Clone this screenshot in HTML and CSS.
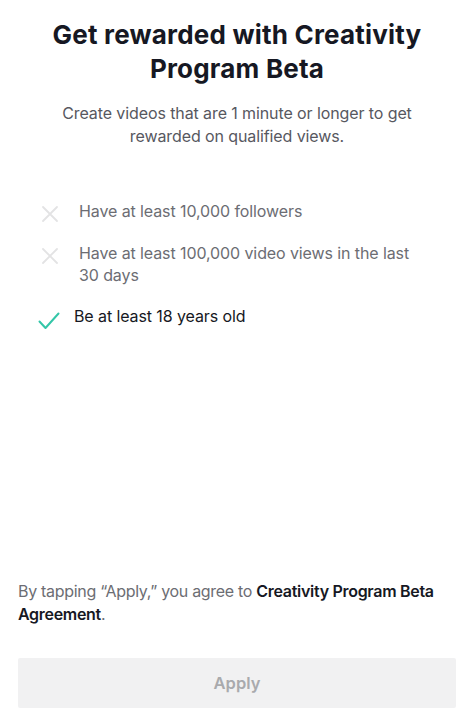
FILE: index.html
```html
<!DOCTYPE html>
<html>
<head>
<meta charset="utf-8">
<link rel="stylesheet" href="styles.css">
</head>
<body>
<div class="page">
  <header class="head">
    <h1 class="title">Get rewarded with Creativity Program Beta</h1>
    <p class="sub">Create videos that are 1 minute or longer to get rewarded on qualified views.</p>
  </header>
  <ul class="reqs">
    <li class="req off">
      <svg class="ico x" viewBox="0 0 18 18"><path d="M2 2L16 16M16 2L2 16" stroke="#e3e3e4" stroke-width="1.8" fill="none" stroke-linecap="round"/></svg>
      <span>Have at least 10,000 followers</span>
    </li>
    <li class="req off">
      <svg class="ico x" viewBox="0 0 18 18"><path d="M2 2L16 16M16 2L2 16" stroke="#e3e3e4" stroke-width="1.8" fill="none" stroke-linecap="round"/></svg>
      <span>Have at least 100,000 video views in the last 30 days</span>
    </li>
    <li class="req on">
      <svg class="ico ck" viewBox="0 0 22 18"><path d="M1.5 9.5L7.5 16L20.5 1.5" stroke="#34c6a8" stroke-width="2" fill="none" stroke-linecap="round" stroke-linejoin="round"/></svg>
      <span>Be at least 18 years old</span>
    </li>
  </ul>
  <footer class="foot">
    <p class="agree">By tapping “Apply,” you agree to <b>Creativity Program Beta Agreement</b>.</p>
    <button class="apply">Apply</button>
  </footer>
</div>
</body>
</html>
```
FILE: styles.css
```css
html, body { margin: 0; padding: 0; background: #fff; }
body { font-family: "Inter", "Lato", sans-serif; color: #161823; }
.page { display: flex; flex-direction: column; min-height: 715px; box-sizing: border-box; padding: 18px 18px 7px; }
.head { text-align: center; padding: 0 12px; }
.title { margin: 0; font-size: 26px; line-height: 34px; font-weight: 700; color: #161823; letter-spacing: 0.2px; }
.sub { margin: 16px 0 0; font-size: 16px; line-height: 23px; color: #57585f; letter-spacing: -0.1px; }
.reqs { list-style: none; margin: 52px 0 0; padding: 0 0 0 20px; }
.req { display: flex; align-items: flex-start; font-size: 16px; line-height: 22px; margin-bottom: 19px; letter-spacing: -0.1px; }
.req.off { color: #6c6d73; }
.req.on { color: #161823; }
.ico { flex: none; }
.ico.x { width: 18px; height: 18px; margin: 5px 20px 0 3px; }
.ico.ck { width: 22px; height: 18px; margin: 7px 14px 0 0; }
.req span { padding-right: 38px; }
.foot { margin-top: auto; }
.agree { margin: 0; font-size: 16px; line-height: 23px; color: #6c6d73; letter-spacing: -0.3px; }
.agree b { color: #161823; font-weight: 600; }
.apply { display: block; width: 100%; height: 50px; margin-top: 32px; border: 0; border-radius: 2px; background: #f1f1f2; color: #a9aaad; font-family: inherit; font-size: 16.5px; font-weight: 600; }
```
